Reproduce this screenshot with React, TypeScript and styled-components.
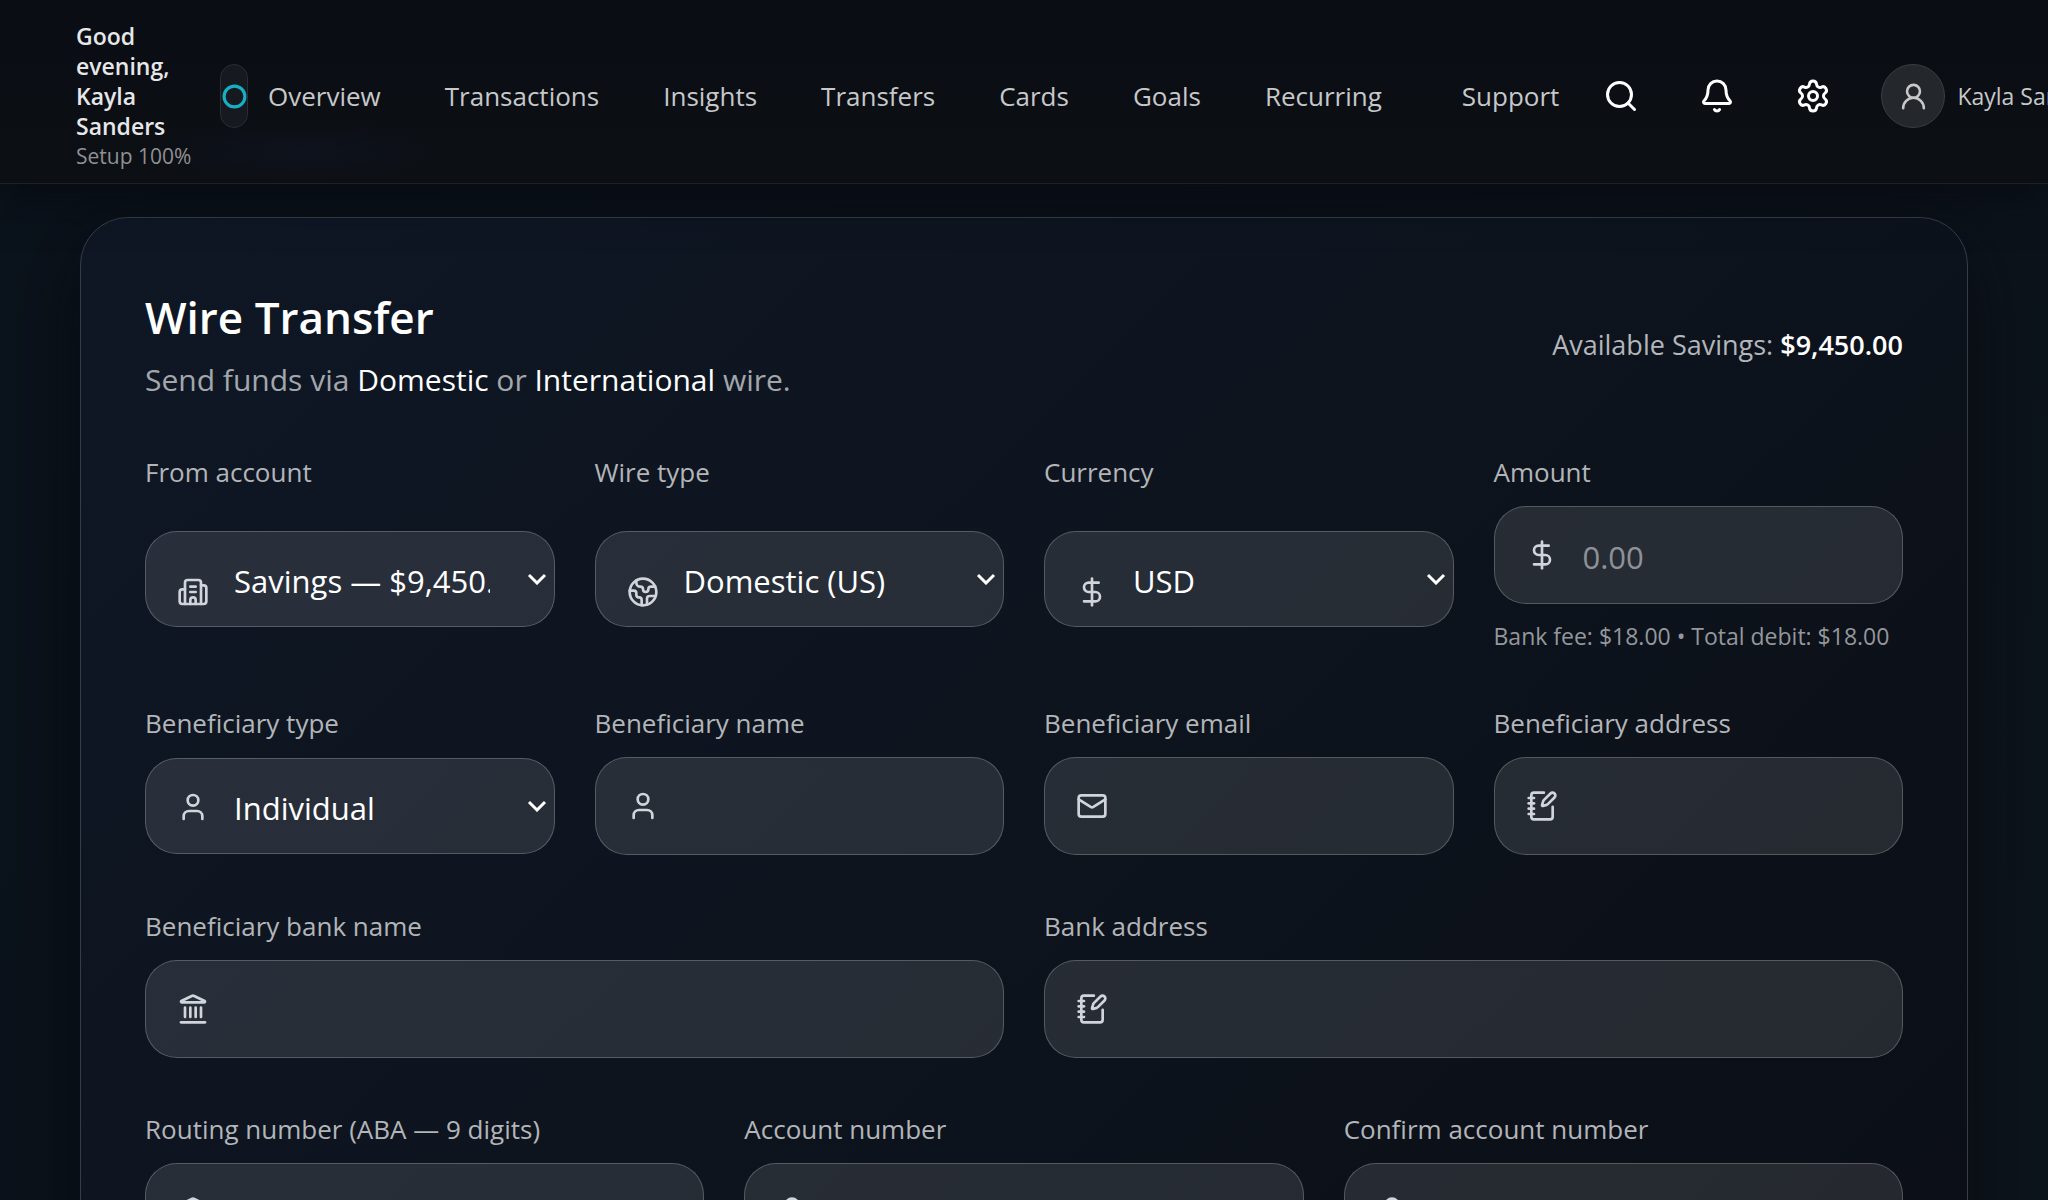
import React from "react";
import styled, { createGlobalStyle } from "styled-components";
import {
  Bell,
  Building2,
  Circle,
  DollarSign,
  Earth,
  Landmark,
  Lock,
  Mail,
  NotebookPen,
  Search,
  Settings,
  User,
  UserRound,
} from "lucide-react";

const GlobalStyle = createGlobalStyle`
  *, *::before, *::after { box-sizing: border-box; }
  html { background: #0a0d13; }
  body {
    margin: 0;
    overflow: hidden;
    color: #fff;
    font-family: "Open Sans", "Noto Sans", sans-serif;
    -webkit-font-smoothing: antialiased;
  }
  button, input, select { font: inherit; color: inherit; }
  h1, p { margin: 0; }
`;

const Page = styled.div`
  height: 100vh;
  overflow: hidden;
  background: linear-gradient(115deg, #0b131c 0%, #0b121a 50%, #0d151c 100%);
`;

const Header = styled.header`
  position: relative;
  z-index: 1;
  display: flex;
  align-items: center;
  padding: 21px 0 12px 76px;
  overflow: hidden;
  white-space: nowrap;
  background:
    radial-gradient(ellipse 160px 32px at 300px 152px, rgba(18, 24, 44, 0.4), transparent),
    linear-gradient(180deg, #0a0d14 0%, #0c0f13 100%);
  border-bottom: 1px solid #1e2225;
  box-shadow: 0 8px 40px rgba(8, 10, 16, 0.9);
`;

const Greeting = styled.div`
  flex: 0 0 116px;
  margin-right: 28px;
  line-height: 30px;
`;

const GreetingName = styled.p`
  width: 100px;
  font-size: 23px;
  font-weight: 600;
  color: #e6e7e8;
  white-space: normal;
`;

const SetupStatus = styled.p`
  font-size: 21px;
  color: #8f9193;
`;

const Pill = styled.button`
  display: flex;
  flex: none;
  align-items: center;
  justify-content: center;
  width: 28px;
  height: 64px;
  margin-right: 20px;
  padding: 0;
  color: #16b0c4;
  background: #161920;
  border: 1px solid #2a2d32;
  border-radius: 16px;
`;

const Nav = styled.nav`
  display: flex;
  flex: none;
  gap: 64px;
`;

const NavLink = styled.a<{ $spaced?: boolean }>`
  margin-left: ${(p) => (p.$spaced ? "16px" : "0")};
  font-size: 26px;
  line-height: 40px;
  color: #c6c8ca;
  text-decoration: none;
`;

const Actions = styled.div`
  display: flex;
  flex: none;
  align-items: center;
  gap: 32px;
  margin-left: 30px;
`;

const IconButton = styled.button`
  display: grid;
  place-items: center;
  width: 64px;
  height: 64px;
  padding: 0;
  color: #fff;
  background: none;
  border: 0;
`;

const Profile = styled.button`
  display: flex;
  align-items: center;
  gap: 12px;
  margin-left: 4px;
  padding: 0;
  font-size: 23px;
  color: #c6c8ca;
  background: none;
  border: 0;
`;

const Avatar = styled.span`
  display: grid;
  place-items: center;
  width: 64px;
  height: 64px;
  background: #24272b;
  border: 1px solid #3a3d41;
  border-radius: 50%;
`;

const Main = styled.main`
  padding: 33px 80px 80px;
`;

const Card = styled.form`
  padding: 64px;
  background: linear-gradient(135deg, #0f1725 0%, #0d141e 50%, #0b0e15 100%);
  border: 1px solid #363d46;
  border-radius: 48px;
  box-shadow: 0 20px 80px rgba(8, 9, 14, 0.8);
`;

const CardHead = styled.div`
  display: flex;
  align-items: center;
  justify-content: space-between;
  margin-bottom: 44px;
`;

const Title = styled.h1`
  font-size: 44px;
  font-weight: 600;
  line-height: 70px;
`;

const Subtitle = styled.p`
  font-size: 30px;
  line-height: 56px;
  color: #a3a7ac;
`;

const Bright = styled.span`
  color: #fff;
`;

const Balance = styled.p`
  font-size: 27px;
  line-height: 40px;
  color: #b3b6ba;
`;

const BalanceValue = styled.strong`
  font-weight: 600;
  color: #fff;
`;

const Fields = styled.div`
  display: grid;
  grid-template-columns: repeat(12, minmax(0, 1fr));
  gap: 51px 40px;
`;

const FieldBox = styled.div<{ $span: number }>`
  display: grid;
  grid-column: span ${(p) => p.$span};
  gap: 14px;
`;

const Label = styled.label`
  font-size: 26px;
  line-height: 40px;
  color: #b3b5b8;
`;

const Control = styled.div`
  position: relative;
`;

const LeadIcon = styled.span`
  position: absolute;
  top: 50%;
  left: 32px;
  height: 32px;
  color: #d1d5db;
  transform: translateY(-50%);
  pointer-events: none;
`;

const TextInput = styled.input`
  display: block;
  width: 100%;
  height: 98px;
  padding: 4px 32px 0 88px;
  font-size: 31px;
  color: #fff;
  background: rgba(255, 255, 255, 0.11);
  border: 1px solid rgba(255, 255, 255, 0.22);
  border-radius: 32px;
  outline: none;

  &::placeholder {
    color: #8e9297;
    opacity: 1;
  }
`;

const SelectWrap = styled.div`
  position: relative;
  height: 96px;
`;

const SelectInput = styled.select`
  width: 100%;
  height: 96px;
  padding: 4px 64px 0 88px;
  font-size: 31px;
  color: #fff;
  background: rgba(255, 255, 255, 0.11);
  border: 1px solid rgba(255, 255, 255, 0.22);
  border-radius: 32px;
  outline: none;
  appearance: none;
`;

const Chevron = styled.svg`
  position: absolute;
  top: 42px;
  right: 8px;
  pointer-events: none;
`;

const Hint = styled.p`
  margin-top: 2px;
  font-size: 23px;
  line-height: 32px;
  color: #94979b;
  white-space: nowrap;
`;

type IconType = React.ComponentType<{ size?: number; strokeWidth?: number }>;

interface FieldProps {
  id: string;
  label: string;
  icon: IconType;
  span: number;
  type?: string;
  placeholder?: string;
  options?: string[];
  hint?: string;
}

function Field({ id, label, icon: Icon, span, type = "text", placeholder, options, hint }: FieldProps) {
  return (
    <FieldBox $span={span}>
      <Label htmlFor={id}>{label}</Label>
      <Control>
        {options ? (
          <SelectWrap>
            <SelectInput id={id} defaultValue={options[0]}>
              {options.map((o) => (
                <option key={o}>{o}</option>
              ))}
            </SelectInput>
            <Chevron width="20" height="12" viewBox="0 0 20 12" fill="none" aria-hidden="true">
              <path d="M2 2l8 8 8-8" stroke="#fff" strokeWidth="3" />
            </Chevron>
          </SelectWrap>
        ) : (
          <TextInput id={id} type={type} placeholder={placeholder} />
        )}
        <LeadIcon>
          <Icon size={32} />
        </LeadIcon>
      </Control>
      {hint && <Hint>{hint}</Hint>}
    </FieldBox>
  );
}

const links = [
  { text: "Overview" },
  { text: "Transactions" },
  { text: "Insights" },
  { text: "Transfers" },
  { text: "Cards" },
  { text: "Goals" },
  { text: "Recurring" },
  { text: "Support", spaced: true },
];

const fields: FieldProps[] = [
  { id: "from", label: "From account", icon: Building2, span: 3, options: ["Savings — $9,450.00"] },
  { id: "wire-type", label: "Wire type", icon: Earth, span: 3, options: ["Domestic (US)", "International"] },
  { id: "currency", label: "Currency", icon: DollarSign, span: 3, options: ["USD"] },
  {
    id: "amount",
    label: "Amount",
    icon: DollarSign,
    span: 3,
    placeholder: "0.00",
    hint: "Bank fee: $18.00 • Total debit: $18.00",
  },
  { id: "ben-type", label: "Beneficiary type", icon: User, span: 3, options: ["Individual", "Business"] },
  { id: "ben-name", label: "Beneficiary name", icon: User, span: 3 },
  { id: "ben-email", label: "Beneficiary email", icon: Mail, span: 3, type: "email" },
  { id: "ben-address", label: "Beneficiary address", icon: NotebookPen, span: 3 },
  { id: "bank-name", label: "Beneficiary bank name", icon: Landmark, span: 6 },
  { id: "bank-address", label: "Bank address", icon: NotebookPen, span: 6 },
  { id: "routing", label: "Routing number (ABA — 9 digits)", icon: Landmark, span: 4 },
  { id: "account", label: "Account number", icon: Lock, span: 4 },
  { id: "account-confirm", label: "Confirm account number", icon: Lock, span: 4 },
];

export default function App() {
  return (
    <Page>
      <GlobalStyle />
      <Header>
        <Greeting>
          <GreetingName>Good evening, Kayla Sanders</GreetingName>
          <SetupStatus>Setup 100%</SetupStatus>
        </Greeting>
        <Pill type="button" aria-label="Assistant">
          <Circle size={25} strokeWidth={3} />
        </Pill>
        <Nav>
          {links.map((l) => (
            <NavLink key={l.text} href="#" $spaced={l.spaced}>
              {l.text}
            </NavLink>
          ))}
        </Nav>
        <Actions>
          <IconButton type="button" aria-label="Search">
            <Search size={36} />
          </IconButton>
          <IconButton type="button" aria-label="Notifications">
            <Bell size={36} />
          </IconButton>
          <IconButton type="button" aria-label="Settings">
            <Settings size={36} />
          </IconButton>
          <Profile type="button">
            <Avatar>
              <UserRound size={31} />
            </Avatar>
            Kayla Sanders
          </Profile>
        </Actions>
      </Header>
      <Main>
        <Card>
          <CardHead>
            <div>
              <Title>Wire Transfer</Title>
              <Subtitle>
                Send funds via <Bright>Domestic</Bright> or <Bright>International</Bright> wire.
              </Subtitle>
            </div>
            <Balance>
              Available Savings: <BalanceValue>$9,450.00</BalanceValue>
            </Balance>
          </CardHead>
          <Fields>
            {fields.map((f) => (
              <Field key={f.id} {...f} />
            ))}
          </Fields>
        </Card>
      </Main>
    </Page>
  );
}
